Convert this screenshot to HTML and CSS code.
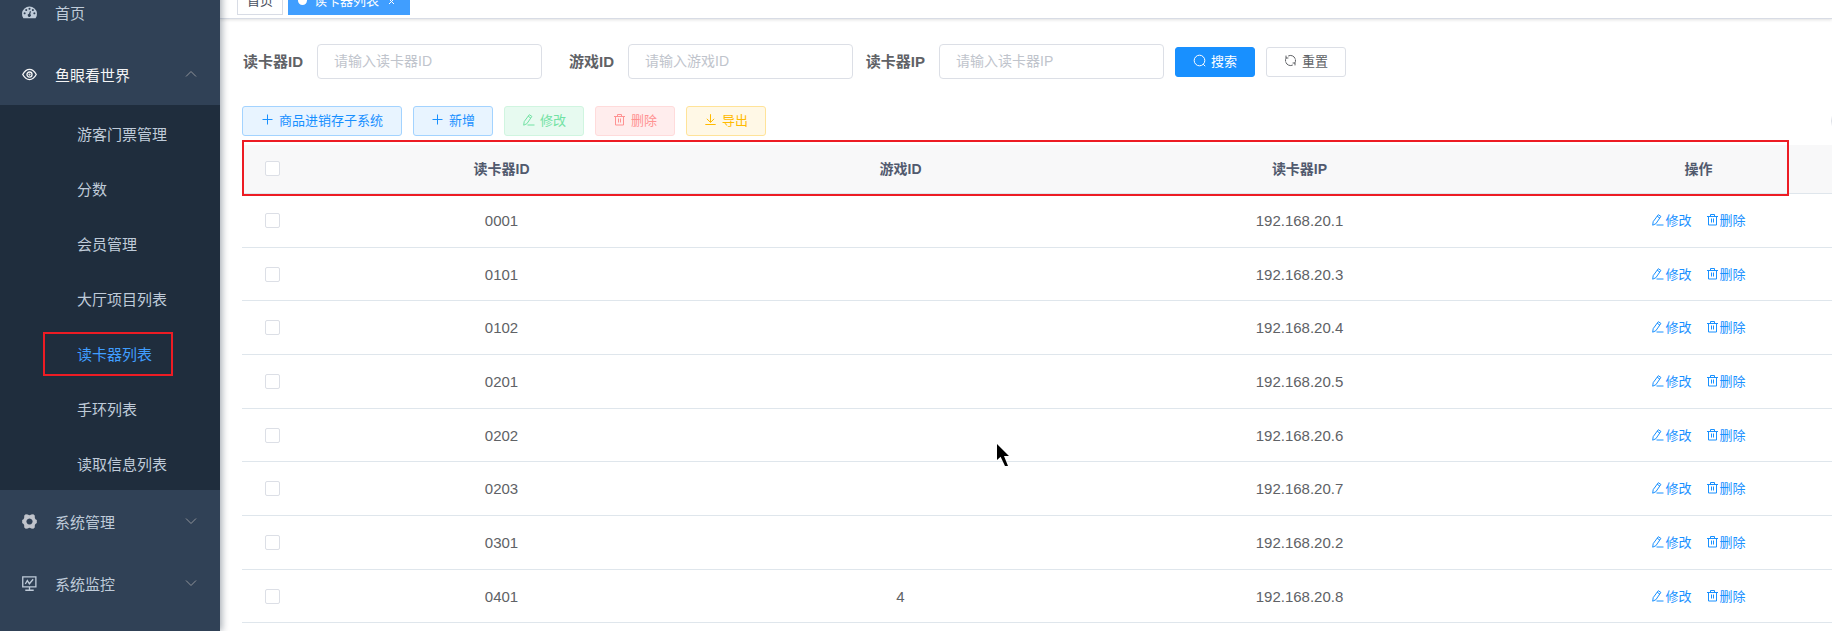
FILE: index.html
```html
<!DOCTYPE html>
<html lang="zh-CN">
<head>
<meta charset="utf-8">
<title>读卡器列表</title>
<link rel="stylesheet" href="styles.css">
</head>
<body>
<svg class="sprite" aria-hidden="true">
  <symbol id="plus" viewBox="0 0 13 13"><path d="M6.500 1.500v10M1.500 6.500h10"/></symbol>
  <symbol id="edit" viewBox="0 0 13 13"><path d="M7.300 1.700l2.600 1.700-5 7.300-3.200 1.500.5-3.600zM6.200 3.300l2.600 1.700M5.500 12h7"/></symbol>
  <symbol id="trash" viewBox="0 0 13 13"><path d="M1 3.500h11M4.500 3.500v-2h4v2M2.500 3.500v8.500h8V3.500M5.500 5.500v4M7.500 5.500v4"/></symbol>
  <symbol id="download" viewBox="0 0 13 13"><path d="M6.500 1.200v8M2.800 5.800l3.700 3.600 3.700-3.600M1.300 11.500h10.400"/></symbol>
  <symbol id="search" viewBox="0 0 13 13"><circle cx="6.500" cy="6.500" r="5.300"/><path d="M10.200 10.200l2 2"/></symbol>
  <symbol id="refresh" viewBox="0 0 13 13"><path d="M1.600 7.600A5 5 0 0 1 2.300 3.700M4.200 2A5 5 0 0 1 11.200 4.800M11.400 5.400A5 5 0 0 1 10.700 9.300M8.800 11A5 5 0 0 1 1.800 8.200M2 1.600V4h2.400M11 11.400V9H8.600"/></symbol>
  <symbol id="down" viewBox="0 0 12 12"><path d="M1 3.500l5 5 5-5"/></symbol>
  <symbol id="up" viewBox="0 0 12 12"><path d="M1 8.500l5-5 5 5"/></symbol>
</svg>

<aside class="sidebar">
  <nav>
    <a class="menu" href="#">
      <svg class="menu-icon" viewBox="0 0 16 16"><path fill="currentColor" fill-rule="evenodd" d="M1.500 14A8 7.800 0 1 1 14.500 14zM8 3a1.100 1.100 0 1 0 .01 0zM4.500 4.200a1.100 1.100 0 1 0 .01 0zM2.800 7.700a1.100 1.100 0 1 0 .01 0zM13.200 7.700a1.100 1.100 0 1 0 .01 0zM11.600 4.200a1.100 1.100 0 1 0 .01 0zM8.500 6.500L7.500 9.300a1.700 1.700 0 1 0 1.300.3l.8-2.800z"/></svg>
      <span>首页</span>
    </a>
    <a class="menu open" href="#">
      <svg class="menu-icon line" viewBox="0 0 16 16"><path d="M.8 8Q3.800 2.600 8 2.600T15.200 8Q12.200 13.400 8 13.400T.8 8z"/><circle cx="8" cy="8" r="2.700"/><circle cx="8" cy="8" r=".5"/></svg>
      <span>鱼眼看世界</span>
      <svg class="arrow line"><use href="#up"/></svg>
    </a>
    <ul class="submenu">
      <li><a href="#">游客门票管理</a></li>
      <li><a href="#">分数</a></li>
      <li><a href="#">会员管理</a></li>
      <li><a href="#">大厅项目列表</a></li>
      <li class="marked"><a class="active" href="#">读卡器列表</a></li>
      <li><a href="#">手环列表</a></li>
      <li><a href="#">读取信息列表</a></li>
    </ul>
    <a class="menu" href="#">
      <svg class="menu-icon gear" viewBox="0 0 16 16"><path fill="currentColor" fill-rule="evenodd" d="M4 .3L6.200.500Q8 2 9.800.500L12 .3L13.600 1.600L13.700 4.200Q14 5.600 15.800 6.500V9.500Q14 10.400 13.700 11.800L13.600 14.400L12 15.700L9.800 15.500Q8 14 6.200 15.500L4 15.700L2.400 14.400L2.300 11.800Q2 10.400.2 9.500V6.500Q2 5.600 2.300 4.200L2.400 1.600zM8 4.700a3.300 3.300 0 1 0 .01 0z"/></svg>
      <span>系统管理</span>
      <svg class="arrow line"><use href="#down"/></svg>
    </a>
    <a class="menu" href="#">
      <svg class="menu-icon line" viewBox="0 0 16 16"><path d="M.8 1h14v10.500H.8zM8 11.500v3.500M3.500 15.200h9M3.500 8.500l2.200-3.600 2.200 3.400 4-4.800"/></svg>
      <span>系统监控</span>
      <svg class="arrow line"><use href="#down"/></svg>
    </a>
  </nav>
</aside>

<main class="main">
  <div class="tabs">
    <a class="tab" href="#">首页</a>
    <a class="tab current" href="#"><i class="dot"></i>读卡器列表<svg class="close line" viewBox="0 0 9 9"><path d="M2 2l5 5M7 2L2 7"/></svg></a>
  </div>
  <div class="content">
    <form class="filters">
      <div class="field"><label for="reader">读卡器ID</label><input id="reader" type="text" placeholder="请输入读卡器ID"></div>
      <div class="field"><label for="game">游戏ID</label><input id="game" type="text" placeholder="请输入游戏ID"></div>
      <div class="field"><label for="ip">读卡器IP</label><input id="ip" type="text" placeholder="请输入读卡器IP"></div>
      <button class="btn solid" type="button"><svg class="icon line"><use href="#search"/></svg>搜索</button>
      <button class="btn" type="button"><svg class="icon line"><use href="#refresh"/></svg>重置</button>
    </form>
    <div class="toolbar">
      <button class="btn blue wide" type="button"><svg class="icon line"><use href="#plus"/></svg>商品进销存子系统</button>
      <button class="btn blue" type="button"><svg class="icon line"><use href="#plus"/></svg>新增</button>
      <button class="btn green" type="button" disabled><svg class="icon line"><use href="#edit"/></svg>修改</button>
      <button class="btn red" type="button" disabled><svg class="icon line"><use href="#trash"/></svg>删除</button>
      <button class="btn yellow" type="button"><svg class="icon line"><use href="#download"/></svg>导出</button>
      <div class="tools"><button class="round" type="button"></button><button class="round" type="button"></button></div>
    </div>
    <div class="table-wrap">
      <table>
        <thead>
          <tr><th class="check"><input type="checkbox"></th><th>读卡器ID</th><th>游戏ID</th><th>读卡器IP</th><th>操作</th></tr>
        </thead>
        <tbody>
          <tr><td><input type="checkbox"></td><td>0001</td><td></td><td>192.168.20.1</td><td><div class="ops"><a href="#"><svg class="icon line"><use href="#edit"/></svg>修改</a><a href="#"><svg class="icon line"><use href="#trash"/></svg>删除</a></div></td></tr>
          <tr><td><input type="checkbox"></td><td>0101</td><td></td><td>192.168.20.3</td><td><div class="ops"><a href="#"><svg class="icon line"><use href="#edit"/></svg>修改</a><a href="#"><svg class="icon line"><use href="#trash"/></svg>删除</a></div></td></tr>
          <tr><td><input type="checkbox"></td><td>0102</td><td></td><td>192.168.20.4</td><td><div class="ops"><a href="#"><svg class="icon line"><use href="#edit"/></svg>修改</a><a href="#"><svg class="icon line"><use href="#trash"/></svg>删除</a></div></td></tr>
          <tr><td><input type="checkbox"></td><td>0201</td><td></td><td>192.168.20.5</td><td><div class="ops"><a href="#"><svg class="icon line"><use href="#edit"/></svg>修改</a><a href="#"><svg class="icon line"><use href="#trash"/></svg>删除</a></div></td></tr>
          <tr><td><input type="checkbox"></td><td>0202</td><td></td><td>192.168.20.6</td><td><div class="ops"><a href="#"><svg class="icon line"><use href="#edit"/></svg>修改</a><a href="#"><svg class="icon line"><use href="#trash"/></svg>删除</a></div></td></tr>
          <tr><td><input type="checkbox"></td><td>0203</td><td></td><td>192.168.20.7</td><td><div class="ops"><a href="#"><svg class="icon line"><use href="#edit"/></svg>修改</a><a href="#"><svg class="icon line"><use href="#trash"/></svg>删除</a></div></td></tr>
          <tr><td><input type="checkbox"></td><td>0301</td><td></td><td>192.168.20.2</td><td><div class="ops"><a href="#"><svg class="icon line"><use href="#edit"/></svg>修改</a><a href="#"><svg class="icon line"><use href="#trash"/></svg>删除</a></div></td></tr>
          <tr><td><input type="checkbox"></td><td>0401</td><td>4</td><td>192.168.20.8</td><td><div class="ops"><a href="#"><svg class="icon line"><use href="#edit"/></svg>修改</a><a href="#"><svg class="icon line"><use href="#trash"/></svg>删除</a></div></td></tr>
        </tbody>
      </table>
      <div class="header-mark"></div>
    </div>
  </div>
</main>
<svg class="pointer" viewBox="0 0 12 22"><path d="M0 0v16l3.600-3.300L8 22h3L7 12h5z"/></svg>
</body>
</html>
```
FILE: styles.css
```css
* { box-sizing: border-box; }

body {
  margin: 0;
  height: 100vh;
  display: flex;
  overflow: hidden;
  background: #fff;
  color: #606266;
  font-family: "Liberation Sans", "Noto Sans CJK SC", sans-serif;
  font-size: 15px;
}

a { color: inherit; text-decoration: none; }
button, input { font-family: inherit; margin: 0; }
.sprite { position: absolute; width: 0; height: 0; }
.line { fill: none; stroke: currentColor; stroke-width: 1; }
.icon { width: 13px; height: 13px; flex: none; }

/* Sidebar, scrolled slightly past its first entry */
.sidebar {
  position: relative;
  z-index: 2;
  flex: none;
  width: 220px;
  margin-top: -19px;
  background: #304156;
  color: #bfcbd9;
  box-shadow: 2px 0 7px rgba(0, 21, 41, 0.35);
}
.menu {
  display: flex;
  align-items: center;
  height: 62px;
  padding: 0 23px 0 22px;
}
.menu span { flex: 1; padding-top: 1px; }
.menu.open { color: #f4f4f5; }
.menu-icon { width: 15px; height: 15px; margin-right: 18px; overflow: visible; }
.menu-icon.line { stroke-width: 1.400; }
.gear { color: #c0c4cc; }
.arrow { width: 12px; height: 12px; color: #909399; }
.submenu { margin: 0; padding: 0; list-style: none; background: #1f2d3d; }
.submenu a {
  display: flex;
  align-items: center;
  height: 55px;
  padding: 2px 0 0 77px;
}
.submenu .active { color: #409eff; }
.marked { position: relative; }
.marked::after {
  content: "";
  position: absolute;
  inset: 7px 47px 4px 43px;
  border: 2px solid #ed1c24;
}

/* Open page tabs */
.main { flex: 1; min-width: 0; }
.tabs {
  display: flex;
  align-items: flex-end;
  gap: 5px;
  height: 19px;
  padding: 0 17px 3px;
  border-bottom: 1px solid #d8dce5;
  box-shadow: 0 1px 3px rgba(0, 0, 0, 0.12);
}
.tab {
  display: flex;
  align-items: center;
  flex: none;
  height: 29px;
  padding: 0 9px 2px;
  border: 1px solid #d8dce5;
  color: #495060;
  font-size: 13px;
}
.tab.current { padding: 0 13px 2px 9px; border-color: #409eff; background: #409eff; color: #fff; }
.dot { width: 9px; height: 9px; margin: 2px 7px 0 0; border-radius: 50%; background: #fff; }
.close { width: 9px; height: 9px; margin: 4px 0 0 8px; }

/* Filters and actions */
.content { padding: 25px 0 0 22px; }
.filters, .toolbar { display: flex; align-items: center; gap: 11px; }
.field { display: flex; align-items: center; }
.field label { width: 75px; padding: 0 14px 3px 0; text-align: right; font-weight: bold; white-space: nowrap; }
.field input {
  width: 225px;
  height: 35px;
  padding: 0 16px 2px;
  border: 1px solid #dcdfe6;
  border-radius: 4px;
  font-size: 14px;
  color: #606266;
}
.field input::placeholder { color: #c0c4cc; }
.btn {
  display: flex;
  align-items: center;
  gap: 5px;
  height: 30px;
  padding: 0 17px 3px;
  border: 1px solid #dcdfe6;
  border-radius: 3px;
  background: #fff;
  color: #606266;
  font-size: 13px;
  white-space: nowrap;
}
.btn.wide { padding: 0 18px 3px; }
.solid { background: #1890ff; border-color: #1890ff; color: #fff; }
.blue { background: #e8f4ff; border-color: #a3d3ff; color: #1890ff; }
.green { background: #e7faf0; border-color: #d0f5e0; color: #71e2a3; }
.red { background: #ffeded; border-color: #ffdbdb; color: #ff9292; }
.yellow { background: #fff8e6; border-color: #ffe399; color: #ffba00; }
.toolbar { margin: 27px -66px 9px 0; }
.tools { display: flex; gap: 7px; margin-left: auto; }
.round { width: 30px; height: 30px; padding: 0; border: 1px solid #dcdfe6; border-radius: 50%; background: #fff; }

/* Reader table, wider than the visible area */
.table-wrap { position: relative; margin-right: -66px; }
table { width: 100%; table-layout: fixed; border-collapse: separate; border-spacing: 0; }
th, td { padding: 0; border-bottom: 1px solid #dfe6ec; text-align: center; }
th { height: 49px; padding-bottom: 2px; background: #f8f8f9; color: #515a6e; font-size: 14px; }
.check { width: 60px; }
td { height: 54px; }
tr:nth-child(3n + 2) td { height: 53px; }
input[type="checkbox"] {
  display: block;
  appearance: none;
  width: 15px;
  height: 15px;
  margin-left: 23px;
  border: 1px solid #dcdfe6;
  border-radius: 2px;
  background: #fff;
}
.ops { display: flex; justify-content: center; gap: 14px; padding-bottom: 2px; color: #1890ff; font-size: 13px; }
.ops a { display: flex; align-items: center; gap: 1px; }
.header-mark {
  position: absolute;
  top: -5px;
  left: 0;
  right: 109px;
  height: 56px;
  border: 2px solid #ed1c24;
}
.pointer { position: absolute; left: 997px; top: 444px; width: 12px; height: 22px; }
```
